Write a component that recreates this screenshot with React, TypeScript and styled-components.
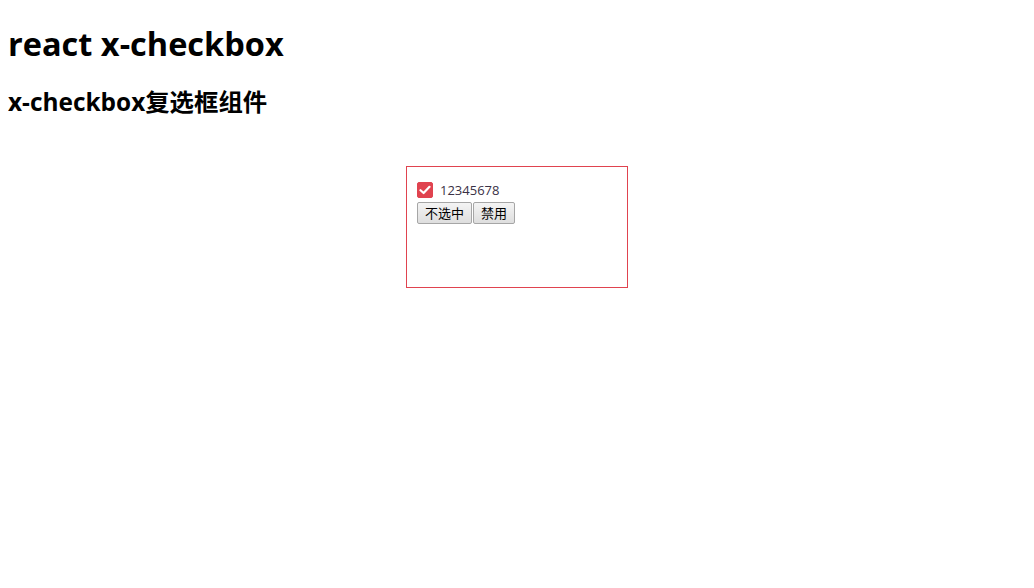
import React, { useState } from "react";
import styled, { createGlobalStyle } from "styled-components";

const Global = createGlobalStyle`
  body {
    margin: 8px;
    font-family: "Open Sans", "Noto Sans CJK SC", sans-serif;
    color: #000;
    background: #fff;
  }
`;

const Title = styled.h1`
  font-size: 32.5px;
  font-weight: 700;
  margin: 14px 0 19px;
  line-height: 44px;
`;

const SubTitle = styled.h2`
  font-size: 24.4px;
  font-weight: 700;
  margin: 20px 0;
  line-height: 32px;
  font-family: "Open Sans", "Noto Sans CJK SC", sans-serif;
`;

const Box = styled.div`
  width: 200px;
  height: 100px;
  padding: 10px;
  border: 1px solid #e0434f;
  margin: 48px auto 0;
`;

const Label = styled.label<{ $disabled: boolean }>`
  display: flex;
  align-items: center;
  height: 25px;
  gap: 7px;
  font-size: 13px;
  color: #3a3145;
  cursor: ${(p) => (p.$disabled ? "not-allowed" : "pointer")};
  opacity: ${(p) => (p.$disabled ? 0.5 : 1)};
`;

const Mark = styled.span<{ $checked: boolean }>`
  width: 16px;
  height: 16px;
  border-radius: 2px;
  box-sizing: border-box;
  background: ${(p) => (p.$checked ? "#e0434f" : "#fff")};
  border: 1px solid ${(p) => (p.$checked ? "#e0434f" : "#bbb")};
  display: flex;
  align-items: center;
  justify-content: center;
`;

const Buttons = styled.div`
  display: flex;
`;

const Btn = styled.button`
  font-family: "Noto Sans CJK SC", sans-serif;
  font-size: 13px;
  height: 22px;
  padding: 0 7px;
  margin: 0 1px 0 0;
  color: #000;
  border: 1px solid #a6a6a6;
  border-radius: 2px;
  background: linear-gradient(#f4f4f4, #dedede);
  line-height: 18px;
`;

export default function App() {
  const [checked, setChecked] = useState(true);
  const [disabled, setDisabled] = useState(false);
  return (
    <>
      <Global />
      <Title>react x-checkbox</Title>
      <SubTitle>x-checkbox复选框组件</SubTitle>
      <Box>
        <Label $disabled={disabled} onClick={() => !disabled && setChecked(!checked)}>
          <Mark $checked={checked}>
            {checked && (
              <svg width="12" height="10" viewBox="0 0 12 10">
                <path d="M1.5 5.2 L4.6 8 L10.5 1.8" fill="none" stroke="#fff" strokeWidth="2.2" strokeLinecap="round" strokeLinejoin="round" />
              </svg>
            )}
          </Mark>
          12345678
        </Label>
        <Buttons>
          <Btn onClick={() => setChecked(!checked)}>{checked ? "不选中" : "选中"}</Btn>
          <Btn onClick={() => setDisabled(!disabled)}>{disabled ? "启用" : "禁用"}</Btn>
        </Buttons>
      </Box>
    </>
  );
}
